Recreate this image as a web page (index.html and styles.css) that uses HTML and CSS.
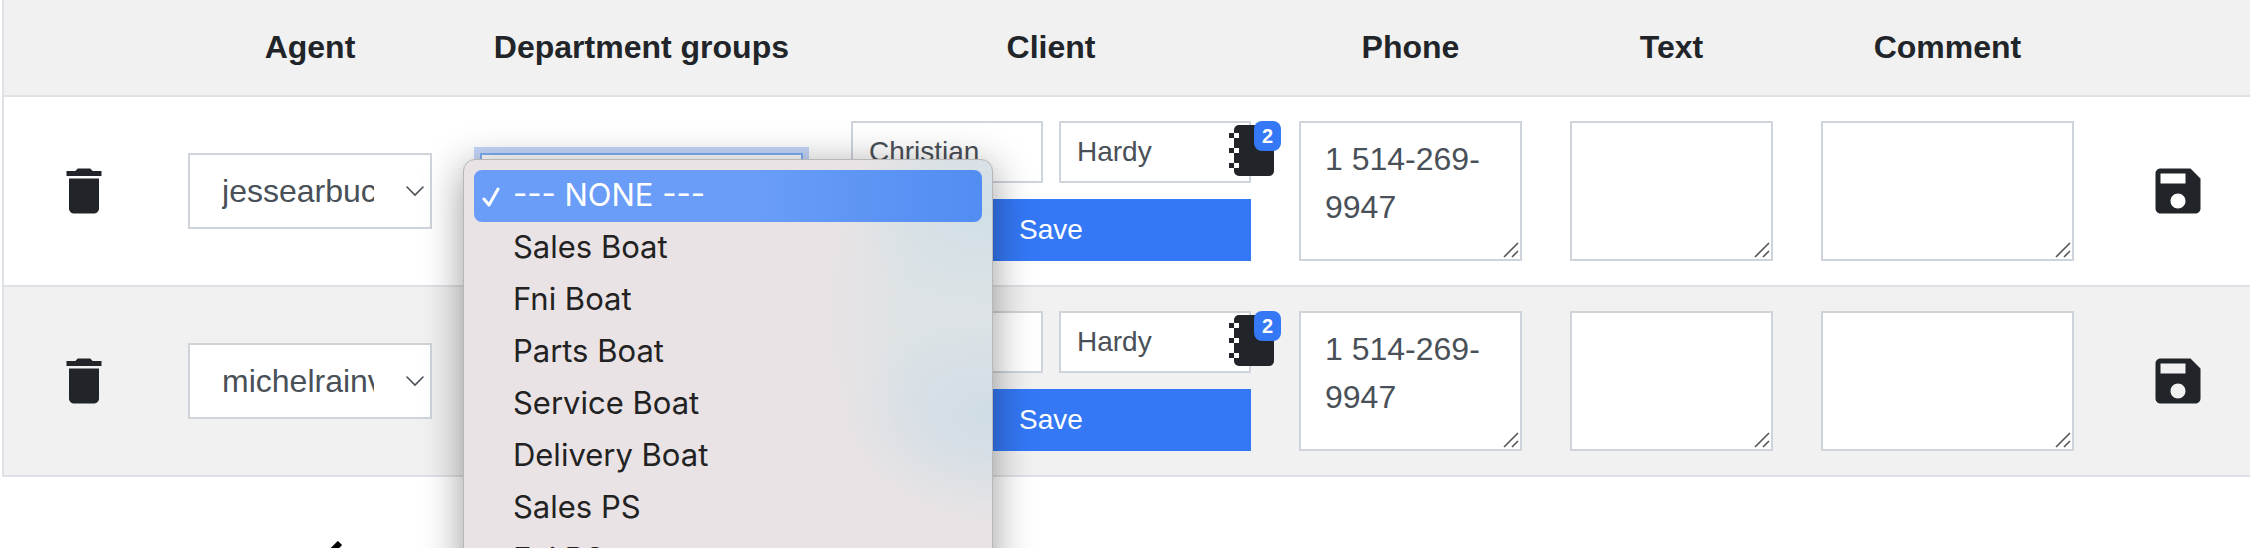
FILE: index.html
```html
<!DOCTYPE html>
<html lang="en">
<head>
<meta charset="utf-8">
<title>Agents</title>
<link rel="stylesheet" href="styles.css">
</head>
<body>
<svg class="sprite" aria-hidden="true">
  <symbol id="i-trash" viewBox="0 0 24 24"><path d="M6 19c0 1.1.9 2 2 2h8c1.1 0 2-.9 2-2V7H6v12zM19 4h-3.5l-1-1h-5l-1 1H5v2h14V4z"/></symbol>
  <symbol id="i-save" viewBox="0 0 24 24"><path d="M17 3H5c-1.11 0-2 .9-2 2v14c0 1.1.89 2 2 2h14c1.1 0 2-.9 2-2V7l-4-4zm-5 16c-1.66 0-3-1.34-3-3s1.34-3 3-3 3 1.34 3 3-1.34 3-3 3zm3-10H5V5h10v4z"/></symbol>
  <symbol id="i-book" viewBox="0 0 46 52"><rect x="6" y="0" width="40" height="51" rx="5"/><path d="M1 8h5v5H1zM1 23h5v5H1zM1 38h5v5H1z"/><path fill="#fff" d="M6 8h5v5H6zM6 23h5v5H6zM6 38h5v5H6z"/></symbol>
  <symbol id="i-grip" viewBox="0 0 16 16"><path d="M1 15 15 1M9 15l6-6" fill="none" stroke="#555" stroke-width="1.6"/></symbol>
</svg>
<main class="page">
  <table class="grid">
    <colgroup>
      <col class="c-del"><col class="c-agent"><col class="c-dept"><col class="c-client"><col class="c-phone"><col class="c-text"><col class="c-comment"><col>
    </colgroup>
    <thead>
      <tr><th></th><th>Agent</th><th>Department groups</th><th>Client</th><th>Phone</th><th>Text</th><th>Comment</th><th></th></tr>
    </thead>
    <tbody>
      <tr>
        <td><button class="icon-btn" type="button" aria-label="Delete"><svg><use href="#i-trash"/></svg></button></td>
        <td><select class="select" aria-label="Agent"><option>jessearbuckle</option></select></td>
        <td>
          <div class="dropdown">
            <select class="select select-open" aria-label="Department groups"><option>--- NONE ---</option></select>
            <ul class="menu" role="listbox" aria-label="Department groups">
              <li class="item item-active" role="option" aria-selected="true"><svg class="check" viewBox="0 0 18 20"><path d="M2 12 7 18 16 2"/></svg>--- NONE ---</li>
              <li class="item" role="option">Sales Boat</li>
              <li class="item" role="option">Fni Boat</li>
              <li class="item" role="option">Parts Boat</li>
              <li class="item" role="option">Service Boat</li>
              <li class="item" role="option">Delivery Boat</li>
              <li class="item" role="option">Sales PS</li>
              <li class="item" role="option">Fni PS</li>
            </ul>
          </div>
        </td>
        <td>
          <div class="client">
            <input class="input" type="text" aria-label="First name" value="Christian">
            <input class="input" type="text" aria-label="Last name" value="Hardy">
            <button class="save" type="button">Save</button>
            <button class="book" type="button" aria-label="Contacts"><svg><use href="#i-book"/></svg><span class="badge">2</span></button>
          </div>
        </td>
        <td><div class="area"><textarea aria-label="Phone">1 514-269-9947</textarea><svg><use href="#i-grip"/></svg></div></td>
        <td><div class="area"><textarea aria-label="Text"></textarea><svg><use href="#i-grip"/></svg></div></td>
        <td><div class="area"><textarea aria-label="Comment"></textarea><svg><use href="#i-grip"/></svg></div></td>
        <td><button class="icon-btn" type="button" aria-label="Save row"><svg><use href="#i-save"/></svg></button></td>
      </tr>
      <tr>
        <td><button class="icon-btn" type="button" aria-label="Delete"><svg><use href="#i-trash"/></svg></button></td>
        <td><select class="select" aria-label="Agent"><option>michelrainville</option></select></td>
        <td><select class="select" aria-label="Department groups"><option></option></select></td>
        <td>
          <div class="client">
            <input class="input" type="text" aria-label="First name">
            <input class="input" type="text" aria-label="Last name" value="Hardy">
            <button class="save" type="button">Save</button>
            <button class="book" type="button" aria-label="Contacts"><svg><use href="#i-book"/></svg><span class="badge">2</span></button>
          </div>
        </td>
        <td><div class="area"><textarea aria-label="Phone">1 514-269-9947</textarea><svg><use href="#i-grip"/></svg></div></td>
        <td><div class="area"><textarea aria-label="Text"></textarea><svg><use href="#i-grip"/></svg></div></td>
        <td><div class="area"><textarea aria-label="Comment"></textarea><svg><use href="#i-grip"/></svg></div></td>
        <td><button class="icon-btn" type="button" aria-label="Save row"><svg><use href="#i-save"/></svg></button></td>
      </tr>
    </tbody>
  </table>
  <div class="below"><svg class="mark" viewBox="0 0 40 40"><path d="M36 2 2 36"/></svg></div>
</main>
</body>
</html>
```
FILE: styles.css
```css
* { box-sizing: border-box; }

body {
  margin: 0;
  background: #fff;
  color: #212529;
  font-family: "Liberation Sans", Arial, sans-serif;
  font-size: 32px;
  line-height: 48px;
}

button, input, select, textarea { font: inherit; margin: 0; border-radius: 0; }

button { border: 0; padding: 0; background: none; color: inherit; }

.sprite { position: absolute; width: 0; height: 0; }

.page { height: 100vh; padding-left: 2px; overflow: hidden; }

/* The last column runs slightly past the right edge. */
.grid {
  width: calc(100% + 8px);
  table-layout: fixed;
  border-collapse: separate;
  border-spacing: 0;
  border-left: 2px solid #dee2e6;
  border-bottom: 2px solid #dee2e6;
}

.c-del { width: 7.1%; }
.c-agent { width: 12.95%; }
.c-dept { width: 16.46%; }
.c-client { width: 19.88%; }
.c-phone { width: 12.02%; }
.c-text { width: 11.14%; }
.c-comment { width: 13.35%; }

.grid th { padding: 23px 24px 24px; background: #f1f1f1; font-weight: 700; white-space: nowrap; }
.grid td { padding: 24px; border-top: 2px solid #dee2e6; vertical-align: middle; }
.grid tbody tr:nth-child(even) td { background: #f1f1f1; }

.icon-btn { display: block; margin: 0 auto; }
.icon-btn svg { display: block; width: 60px; height: 60px; fill: #212529; }

.select {
  appearance: none;
  display: block;
  width: 100%;
  height: 76px;
  padding: 12px 56px 12px 32px;
  border: 2px solid #ced4da;
  background: #fff url("data:image/svg+xml,%3Csvg xmlns='http://www.w3.org/2000/svg' viewBox='0 0 18 11'%3E%3Cpath d='M1 1l8 8 8-8' fill='none' stroke='%23495057' stroke-width='1.6' stroke-linecap='round'/%3E%3C/svg%3E") no-repeat right 6px center / 18px 11px;
  color: #495057;
}

.dropdown { position: relative; }
.select-open { border-color: #80aef5; box-shadow: 0 0 0 6px #c4d6f9; }

.menu {
  position: absolute;
  z-index: 10;
  top: 6px;
  left: -17px;
  width: 530px;
  margin: 0;
  padding: 10px;
  list-style: none;
  border: 1px solid #b9b6b8;
  border-radius: 12px;
  background:
    radial-gradient(150px 100px at 100% 50px, #d0dfe6, transparent 100%),
    radial-gradient(150px 100px at 100% 255px, #d0dce5, transparent 100%),
    radial-gradient(170px 220px at 100% 150px, #dde3e6 50%, transparent 100%),
    #e9e3e5;
  box-shadow: 0 8px 40px rgba(0, 0, 0, .4);
  color: #222;
  font-family: Inter, "Liberation Sans", sans-serif;
  font-size: 31px;
  line-height: 50px;
}
.item { position: relative; padding: 0 0 2px 39px; border-radius: 8px; white-space: nowrap; }
.item-active { background: linear-gradient(90deg, #699df8 55%, #528df2); color: #fff; }
.check { position: absolute; left: 8px; top: 17px; width: 18px; height: 20px; fill: none; stroke: #fff; stroke-width: 3; stroke-linecap: round; stroke-linejoin: round; }

.client { position: relative; display: grid; grid-template-columns: 1fr 1fr; gap: 16px; font-size: 28px; line-height: 42px; }
.input { width: 100%; min-width: 0; height: 62px; padding: 8px 16px; border: 2px solid #ced4da; background: #fff; color: #495057; }
.save { grid-column: 1 / -1; height: 62px; background: #3478f6; color: #fff; }

.book { position: absolute; top: 0; right: -30px; width: 53px; height: 56px; padding-top: 4px; text-align: left; }
.book svg { display: block; width: 46px; height: 52px; fill: #212529; }
.badge { position: absolute; top: 0; right: 0; padding: 0 8px; border-radius: 8px; background: #3478f6; color: #fff; font-size: 20px; font-weight: 700; line-height: 30px; }

.area { display: grid; }
.area textarea {
  grid-area: 1 / 1;
  width: 100%;
  height: 140px;
  padding: 12px 24px;
  border: 2px solid #ced4da;
  background: #fff;
  color: #495057;
  resize: none;
  overflow: hidden;
}
.area svg { grid-area: 1 / 1; place-self: end; width: 16px; height: 16px; margin: 3px; pointer-events: none; }

.below { padding: 64px 0 0 302px; }
.mark { display: block; width: 40px; height: 40px; fill: none; stroke: #000; stroke-width: 6; }
```
